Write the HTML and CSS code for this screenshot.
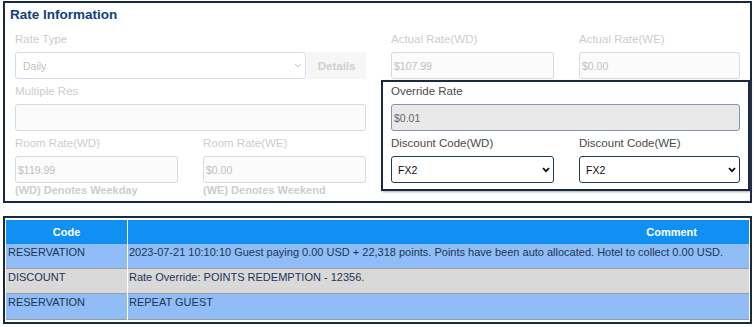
FILE: index.html
```html
<!DOCTYPE html>
<html lang="en">
<head>
  <meta charset="UTF-8">
  <meta name="viewport" content="width=device-width, initial-scale=1.0">
  <title>Rate Information</title>
  <link rel="stylesheet" href="styles.css">
</head>
<body>
  <div class="panel">
    <h2 class="title">Rate Information</h2>
    <div class="cols">
      <div class="col-left">
        <div class="label">Rate Type</div>
        <div class="rate-type">
          <div class="select-wrap">
            <select class="select muted" disabled><option>Daily</option></select>
            <svg class="chev light" width="8" height="5" viewBox="0 0 8 5"><path d="M1 1l3 3 3-3" fill="none" stroke="#c4c4c4" stroke-width="1"/></svg>
          </div>
          <button class="details" disabled>Details</button>
        </div>
        <div class="label">Multiple Res</div>
        <input class="field" type="text" disabled>
        <div class="pair">
          <div>
            <div class="label">Room Rate(WD)</div>
            <input class="field" type="text" value="$119.99" disabled>
            <div class="note">(WD) Denotes Weekday</div>
          </div>
          <div>
            <div class="label">Room Rate(WE)</div>
            <input class="field" type="text" value="$0.00" disabled>
            <div class="note">(WE) Denotes Weekend</div>
          </div>
        </div>
      </div>

      <div class="col-right">
        <div class="pair inset">
          <div>
            <div class="label">Actual Rate(WD)</div>
            <input class="field" type="text" value="$107.99" disabled>
          </div>
          <div>
            <div class="label">Actual Rate(WE)</div>
            <input class="field" type="text" value="$0.00" disabled>
          </div>
        </div>
        <div class="override">
          <div class="label first">Override Rate</div>
          <input class="field locked" type="text" value="$0.01" readonly>
          <div class="pair">
            <div>
              <div class="label">Discount Code(WD)</div>
              <div class="select-wrap">
                <select class="select active"><option>FX2</option></select>
                <svg class="chev" width="8" height="6" viewBox="0 0 8 6"><path d="M1 1.2l3 3 3-3" fill="none" stroke="#111" stroke-width="1.8"/></svg>
              </div>
            </div>
            <div>
              <div class="label">Discount Code(WE)</div>
              <div class="select-wrap">
                <select class="select active"><option>FX2</option></select>
                <svg class="chev" width="8" height="6" viewBox="0 0 8 6"><path d="M1 1.2l3 3 3-3" fill="none" stroke="#111" stroke-width="1.8"/></svg>
              </div>
            </div>
          </div>
        </div>
      </div>
    </div>
  </div>

  <div class="notes">
    <table>
      <thead>
        <tr>
          <th class="code">Code</th>
          <th class="comment">Comment</th>
        </tr>
      </thead>
      <tbody>
        <tr class="blue">
          <td>RESERVATION</td>
          <td>2023-07-21 10:10:10 Guest paying 0.00 USD + 22,318 points. Points have been auto allocated. Hotel to collect 0.00 USD.</td>
        </tr>
        <tr class="grey">
          <td>DISCOUNT</td>
          <td>Rate Override: POINTS REDEMPTION - 12356.</td>
        </tr>
        <tr class="blue last">
          <td>RESERVATION</td>
          <td>REPEAT GUEST</td>
        </tr>
      </tbody>
    </table>
  </div>
</body>
</html>
```

FILE: styles.css
```css
body {
  font-family: 'Liberation Sans', Arial, sans-serif;
  background-color: #fff;
  margin: 0;
}

.panel {
  margin: 1px 4px 0 3px;
  border: 2px solid #1b2940;
  padding: 0 0 3px 5px;
}

.title {
  margin: 0;
  font-size: 13.5px;
  line-height: 24px;
  color: #11407e;
  font-weight: bold;
}

.cols {
  display: flex;
  padding-left: 5px;
  gap: 15px;
}

.col-left {
  width: 351px;
}

.col-right {
  width: 369px;
}

.label {
  font-size: 11.5px;
  line-height: 15px;
  padding: 5px 0;
  color: #cdcdcd;
  white-space: nowrap;
}

.field {
  display: block;
  box-sizing: border-box;
  width: 100%;
  height: 27px;
  margin: 0;
  padding: 0 2px;
  font-family: inherit;
  font-size: 10.5px;
  color: #c0c0c0;
  background-color: #fbfbfb;
  border: 1px solid #d3dbe8;
  border-radius: 3px;
}

.rate-type {
  display: flex;
}

.rate-type .select-wrap {
  width: 292px;
}

.select-wrap {
  position: relative;
}

.select {
  display: block;
  box-sizing: border-box;
  width: 100%;
  height: 27px;
  margin: 0;
  font-family: inherit;
  font-size: 10.5px;
  -webkit-appearance: none;
  appearance: none;
  background-color: #fff;
  border-radius: 3px;
}

.select.muted {
  padding: 0 7px;
  color: #c0c0c0;
  border: 1px solid #d3dbe8;
  opacity: 1;
}

.select.active {
  padding: 0 6px;
  color: #111;
  border: 1px solid #203a63;
}

.chev {
  position: absolute;
  right: 4px;
  top: 11px;
}

.details {
  width: 59px;
  height: 27px;
  margin-left: 1px;
  padding: 0;
  font-family: inherit;
  font-size: 11.5px;
  font-weight: bold;
  color: #cfcfcf;
  background-color: #f6f6f6;
  border: none;
  border-radius: 0 3px 3px 0;
}

.pair {
  display: grid;
  grid-template-columns: 163px 163px;
  column-gap: 25px;
}

.inset {
  padding: 0 10px;
  grid-template-columns: 163px 1fr;
}

.note {
  font-size: 11px;
  font-weight: bold;
  line-height: 15px;
  color: #cdcdcd;
}

.override {
  margin-top: 1px;
  padding: 0 8px 6px 8px;
  border: 2px solid #1b2940;
  box-shadow: 1px 1px 2px rgba(60, 80, 110, 0.45);
}

.override .label {
  color: #4a4a4a;
}

.override .label.first {
  padding: 2px 0 5px;
}

.override .pair {
  grid-template-columns: 163px 1fr;
}

.field.locked {
  color: #666;
  background-color: #e9e9e9;
  border-color: #8294b2;
}

.notes {
  margin: 13px 4px 0 3px;
  border: 2px solid #1b2940;
  padding: 2px 0 2px;
}

.notes table {
  width: 100%;
  border-collapse: separate;
  border-spacing: 1px 0;
  font-size: 11px;
}

.notes th {
  height: 24px;
  padding: 0;
  background-color: #1190f3;
  color: #fff;
  font-size: 11px;
  font-weight: bold;
}

.notes th.code {
  width: 121px;
  text-align: center;
}

.notes th.comment {
  text-align: right;
  padding-right: 52px;
}

.notes td {
  height: 23px;
  padding: 1px 2px 0;
  vertical-align: top;
  color: #1c3557;
  line-height: 14px;
  border-bottom: 1px solid #9c9c9c;
  white-space: nowrap;
}

.notes td + td {
  padding-left: 1px;
}

.notes tr.blue td {
  background-color: #90bdf6;
}

.notes tr.grey td {
  background-color: #d9d9d9;
}

.notes tr.last td {
  height: 24px;
}
```
